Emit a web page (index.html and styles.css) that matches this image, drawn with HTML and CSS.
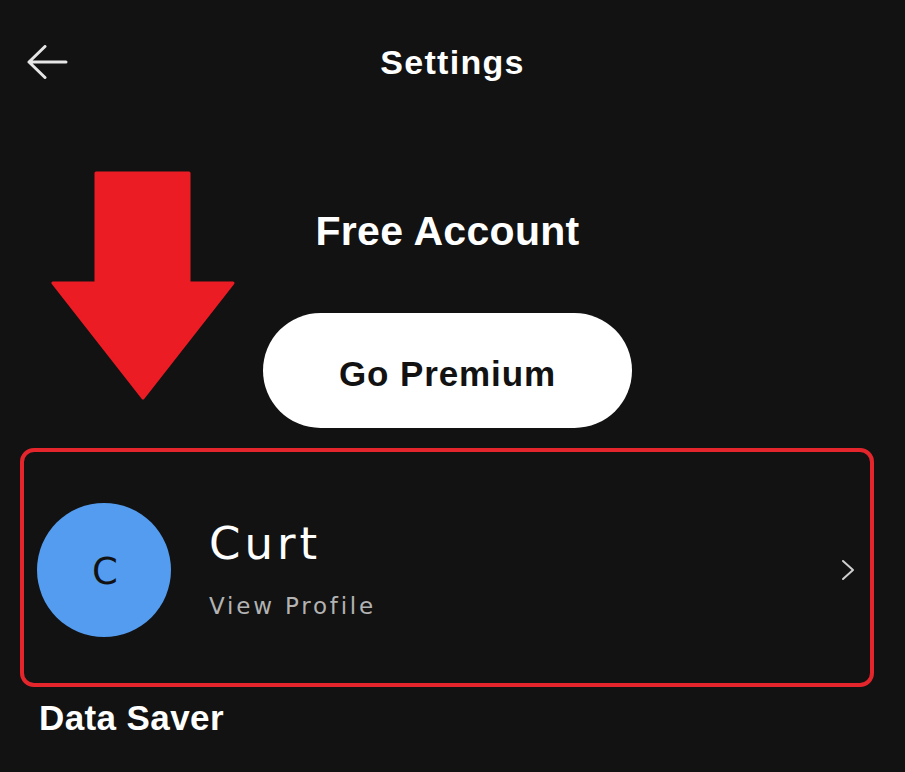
FILE: index.html
```html
<!DOCTYPE html>
<html lang="en">
<head>
    <meta charset="UTF-8">
    <meta name="viewport" content="width=device-width, initial-scale=1.0">
    <title>Settings</title>
    <link rel="stylesheet" href="styles.css">
</head>
<body>

    <header class="top-bar">
        <div class="back-btn">
            <svg width="42" height="34" viewBox="0 0 42 34">
                <path d="M40 17 H3 M19 1.5 L3 17 L19 32.5" fill="none" stroke="#e6e6e6" stroke-width="3" stroke-linecap="round" stroke-linejoin="round"/>
            </svg>
        </div>
        <div class="page-title">Settings</div>
        <div></div>
    </header>

    <main class="settings">
        <!-- seta de destaque -->
        <svg class="pointer-arrow" width="184" height="230" viewBox="-2 -2 184 230">
            <polygon points="43,0 136,0 136,110 180,110 90,225 0,110 43,110" fill="#ec1c24" stroke="#ec1c24" stroke-width="3" stroke-linejoin="round"/>
        </svg>

        <div class="account">
            <div class="account-type">Free Account</div>
            <div class="premium-btn">Go Premium</div>
        </div>

        <div class="profile-row">
            <div class="avatar">C</div>
            <div class="profile-info">
                <div class="profile-name">Curt</div>
                <div class="profile-link">View Profile</div>
            </div>
            <svg class="chevron" width="14" height="22" viewBox="0 0 14 22">
                <polyline points="2,2 12,11 2,20" fill="none" stroke="#cfcfcf" stroke-width="2" stroke-linecap="round" stroke-linejoin="round"/>
            </svg>
        </div>

        <div class="section-title">Data Saver</div>
    </main>

</body>
</html>
```

FILE: styles.css
```css
* { box-sizing: border-box; }
body {
    background-color: #121212; color: #fff;
    font-family: 'Liberation Sans', Arial, Helvetica, sans-serif;
    margin: 0; overflow: hidden;
}

/* TOPO */
.top-bar {
    display: grid; grid-template-columns: 1fr auto 1fr;
    align-items: center; height: 124px;
}
.back-btn { padding-left: 26px; display: flex; align-items: center; }
.page-title { font-size: 34px; font-weight: bold; letter-spacing: 1.3px; }

/* CONTEUDO */
.settings { position: relative; }

.pointer-arrow { position: absolute; left: 51px; top: 47px; }

.account {
    display: flex; flex-direction: column; align-items: center;
    padding-right: 10px; padding-top: 84px;
}
.account-type { font-size: 41px; font-weight: bold; letter-spacing: 0.3px; }

.premium-btn {
    margin-top: 58px; width: 369px; height: 115px;
    background: #fff; color: #121212; border-radius: 60px;
    display: flex; align-items: center; justify-content: center;
    padding-top: 6px;
    font-size: 35px; font-weight: bold; letter-spacing: 0.9px;
}

/* PERFIL COM DESTAQUE VERMELHO */
.profile-row {
    margin: 20px 31px 0 20px; height: 239px;
    border: 4px solid #e4262c; border-radius: 14px;
    display: flex; align-items: center;
    padding: 5px 15px 0 13px;
}
.avatar {
    width: 134px; height: 134px; border-radius: 50%;
    background: #539cf0; color: #121212; flex-shrink: 0;
    display: flex; align-items: center; justify-content: center;
    font-family: 'DejaVu Sans', Verdana, sans-serif;
    font-size: 37px; padding-top: 2px; padding-left: 2px;
}
.profile-info {
    flex: 1; margin-left: 38px;
    font-family: 'DejaVu Sans', Verdana, sans-serif;
}
.profile-name { font-size: 45px; line-height: 48px; letter-spacing: 4px; }
.profile-link {
    font-size: 23px; line-height: 28px; margin-top: 24px;
    color: #b3b3b3; letter-spacing: 2.8px;
}

.section-title {
    margin-top: 11px; padding-left: 39px;
    font-size: 35px; font-weight: bold; letter-spacing: 0.4px;
}
```
